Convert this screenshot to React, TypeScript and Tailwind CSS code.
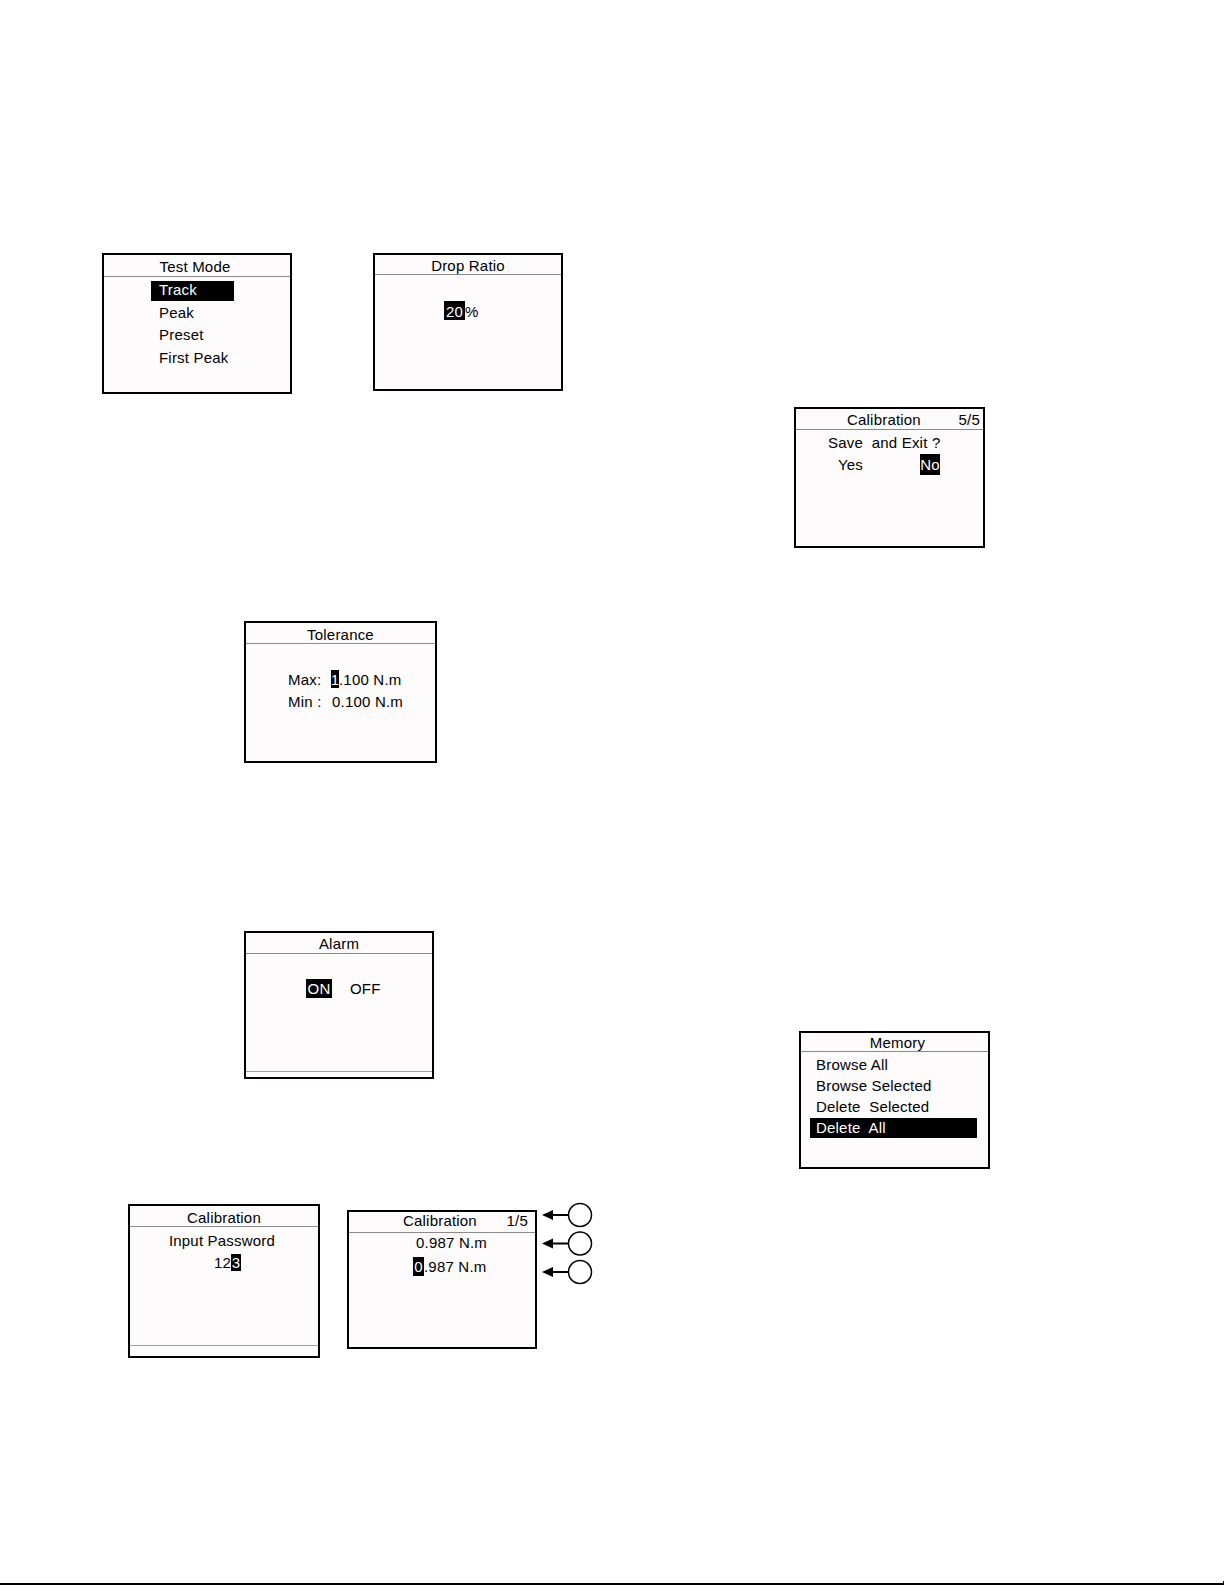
import React from "react";

const font = "font-['Liberation_Sans',Arial,sans-serif]";

function Hl({ children, className = "" }: { children: React.ReactNode; className?: string }) {
  return <span className={`bg-black text-white inline-flex items-center justify-center ${className}`}>{children}</span>;
}

function Screen({
  pos,
  header,
  headerH,
  footer,
  children,
}: {
  pos: string;
  header: React.ReactNode;
  headerH: string;
  footer?: string;
  children: React.ReactNode;
}) {
  return (
    <div className={`absolute ${pos} border-2 border-black bg-[#fdfbfc] flex flex-col`}>
      <div className={`${headerH} border-b border-[#8a8a8a] flex items-center shrink-0`}>{header}</div>
      <div className="flex-1 flex flex-col">{children}</div>
      {footer ? <div className={`${footer} border-t border-[#a0a0a0] shrink-0`} /> : null}
    </div>
  );
}

function Arrows() {
  const ys = [15, 43.5, 72];
  return (
    <svg className="absolute left-[540px] top-[1200px]" width="56" height="88" viewBox="0 0 56 88">
      {ys.map((y) => (
        <g key={y}>
          <polygon points={`2,${y} 13,${y - 5} 13,${y + 5}`} fill="#000" />
          <line x1="12" y1={y} x2="28" y2={y} stroke="#000" strokeWidth="2" />
          <circle cx="40" cy={y} r="11.5" fill="#fff" stroke="#000" strokeWidth="1.5" />
        </g>
      ))}
    </svg>
  );
}

export default function App() {
  return (
    <div className={`w-[1225px] h-[1585px] bg-white text-black text-[15px] leading-none tracking-[0.2px] flex flex-col ${font}`}>
      <div className="relative flex-1">
        {/* Test Mode */}
        <Screen
          pos="left-[102px] top-[253px] w-[190px] h-[141px]"
          headerH="h-[22px]"
          header={<div className="w-full text-center pr-[4px] pt-[1px]">Test Mode</div>}
        >
          <div className="pt-[3px] pl-[47px] flex flex-col">
            <div className="h-[22px] flex items-center">
              <Hl className="w-[83px] h-[20px] !justify-start pl-[8px] pb-[3px]">Track</Hl>
            </div>
            <div className="h-[22.5px] flex items-center pl-[8px] pb-[2px]">Peak</div>
            <div className="h-[22.5px] flex items-center pl-[8px] pb-[2px]">Preset</div>
            <div className="h-[22.5px] flex items-center pl-[8px] pb-[2px]">First Peak</div>
          </div>
        </Screen>

        {/* Drop Ratio */}
        <Screen
          pos="left-[373px] top-[253px] w-[190px] h-[138px]"
          headerH="h-[20px]"
          header={<div className="w-full text-center pt-[1px]">Drop Ratio</div>}
        >
          <div className="pt-[26px] pl-[69px] flex items-center">
            <Hl className="h-[19px] w-[21px] pt-[1px]">20</Hl>
            <span className="pt-[1px]">%</span>
          </div>
        </Screen>

        {/* Calibration 5/5 */}
        <Screen
          pos="left-[794px] top-[407px] w-[191px] h-[141px]"
          headerH="h-[21px]"
          header={
            <div className="w-full flex justify-between pl-[51px] pr-[3px] pt-[1px]">
              <span>Calibration</span>
              <span>5/5</span>
            </div>
          }
        >
          <div className="pt-[1px] flex flex-col">
            <div className="h-[22px] flex items-center pl-[32px] whitespace-pre">Save  and Exit ?</div>
            <div className="h-[23px] flex items-center pl-[42px]">
              <span>Yes</span>
              <Hl className="ml-[57px] h-[21px] w-[20px]">No</Hl>
            </div>
          </div>
        </Screen>

        {/* Tolerance */}
        <Screen
          pos="left-[244px] top-[621px] w-[193px] h-[142px]"
          headerH="h-[21px]"
          header={<div className="w-full text-center pt-[2px]">Tolerance</div>}
        >
          <div className="pt-[24px] pl-[42px] flex flex-col">
            <div className="h-[22px] flex items-center">
              <span className="w-[43px]">Max:</span>
              <Hl className="h-[18px] w-[8px]">1</Hl>
              <span>.100 N.m</span>
            </div>
            <div className="h-[23px] flex items-center">
              <span className="w-[44px]">Min :</span>
              <span>0.100 N.m</span>
            </div>
          </div>
        </Screen>

        {/* Alarm */}
        <Screen
          pos="left-[244px] top-[931px] w-[190px] h-[148px]"
          headerH="h-[21px]"
          footer="h-[6px]"
          header={<div className="w-full text-center pt-[1px]">Alarm</div>}
        >
          <div className="pt-[25px] pl-[60px] flex items-center">
            <Hl className="h-[19px] w-[26px]">ON</Hl>
            <span className="ml-[18px]">OFF</span>
          </div>
        </Screen>

        {/* Calibration password */}
        <Screen
          pos="left-[128px] top-[1204px] w-[192px] h-[154px]"
          headerH="h-[21px]"
          footer="h-[11px]"
          header={<div className="w-full text-center pt-[2px]">Calibration</div>}
        >
          <div className="pt-[2px] flex flex-col">
            <div className="h-[22px] flex items-center justify-center pr-[4px]">Input Password</div>
            <div className="h-[22px] flex items-center pl-[84px]">
              <span>12</span>
              <Hl className="h-[17px] w-[10px]">3</Hl>
            </div>
          </div>
        </Screen>

        {/* Calibration 1/5 */}
        <Screen
          pos="left-[347px] top-[1210px] w-[190px] h-[139px]"
          headerH="h-[21px]"
          header={
            <div className="w-full flex justify-between pl-[54px] pr-[7px] pb-[3px]">
              <span>Calibration</span>
              <span>1/5</span>
            </div>
          }
        >
          <div className="flex flex-col">
            <div className="h-[22px] flex items-center pl-[67px] pb-[3px]">0.987 N.m</div>
            <div className="h-[23px] flex items-center pl-[64px]">
              <Hl className="h-[19px] w-[11px]">0</Hl>
              <span>.987 N.m</span>
            </div>
          </div>
        </Screen>
        <Arrows />

        {/* Memory */}
        <Screen
          pos="left-[799px] top-[1031px] w-[191px] h-[138px]"
          headerH="h-[19px]"
          header={<div className="w-full text-center pl-[6px] pt-[1px]">Memory</div>}
        >
          <div className="pt-[2px] flex flex-col">
            <div className="h-[21px] flex items-center pl-[15px]">Browse All</div>
            <div className="h-[21px] flex items-center pl-[15px]">Browse Selected</div>
            <div className="h-[21px] flex items-center pl-[15px] whitespace-pre">Delete  Selected</div>
            <div className="h-[21px] flex items-center pl-[9px]">
              <Hl className="w-[167px] h-[20px] !justify-start pl-[6px] whitespace-pre">Delete  All</Hl>
            </div>
          </div>
        </Screen>
      </div>
      <div className="h-[2px] bg-black mr-[2px] relative">
        <div className="absolute right-[-1px] bottom-0 w-[1px] h-[4px] bg-black" />
      </div>
    </div>
  );
}
